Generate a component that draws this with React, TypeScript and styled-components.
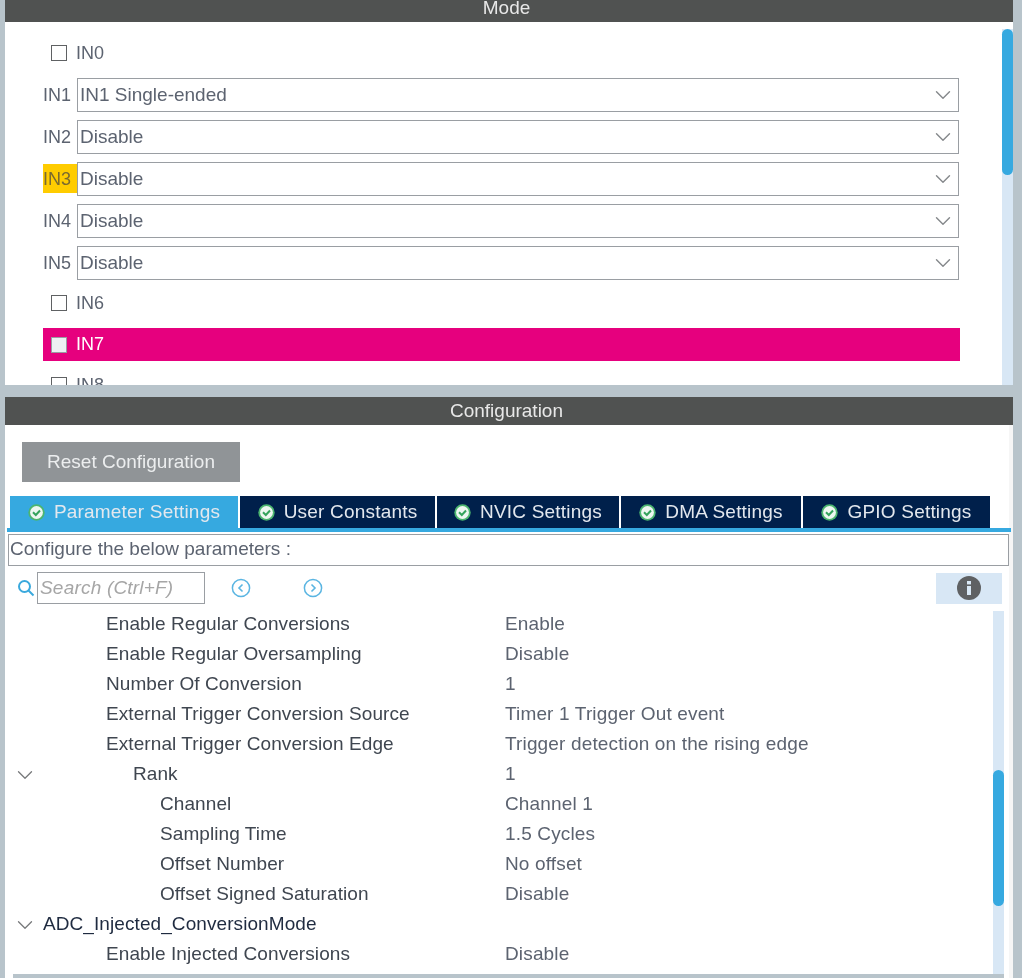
import React from "react";
import styled, { createGlobalStyle } from "styled-components";
import { ChevronDown } from "lucide-react";

const GlobalStyle = createGlobalStyle`
  html, body {
    margin: 0;
    padding: 0;
    background: #b8c4cb;
  }
  body {
    font-family: "Liberation Sans", Arial, sans-serif;
    overflow: hidden;
  }
`;

const channels = [
  { label: "IN1", value: "IN1 Single-ended" },
  { label: "IN2", value: "Disable" },
  { label: "IN3", value: "Disable", warn: true },
  { label: "IN4", value: "Disable" },
  { label: "IN5", value: "Disable" },
];

const tabs = [
  { label: "Parameter Settings", width: 228, active: true },
  { label: "User Constants", width: 195 },
  { label: "NVIC Settings", width: 182 },
  { label: "DMA Settings", width: 180 },
  { label: "GPIO Settings", width: 187 },
];

const params = [
  { name: "Enable Regular Conversions", value: "Enable", level: 1 },
  { name: "Enable Regular Oversampling", value: "Disable", level: 1 },
  { name: "Number Of Conversion", value: "1", level: 1 },
  { name: "External Trigger Conversion Source", value: "Timer 1 Trigger Out event", level: 1 },
  { name: "External Trigger Conversion Edge", value: "Trigger detection on the rising edge", level: 1 },
  { name: "Rank", value: "1", level: 2, open: true },
  { name: "Channel", value: "Channel 1", level: 3 },
  { name: "Sampling Time", value: "1.5 Cycles", level: 3 },
  { name: "Offset Number", value: "No offset", level: 3 },
  { name: "Offset Signed Saturation", value: "Disable", level: 3 },
  { name: "ADC_Injected_ConversionMode", value: "", level: 0, open: true },
  { name: "Enable Injected Conversions", value: "Disable", level: 1 },
];

const CheckIcon = () => (
  <svg width="17" height="17" viewBox="0 0 17 17">
    <circle cx="8.5" cy="8.5" r="8.2" fill="#4cb56f" />
    <circle cx="8.5" cy="8.5" r="6.4" fill="#eef7f1" />
    <path d="M5 8.3 L7.8 11 L12 6.5" fill="none" stroke="#35a35c" strokeWidth="2" />
  </svg>
);

const ArrowCircle = ({ dir }: { dir: "left" | "right" }) => (
  <svg width="20" height="20" viewBox="0 0 20 20">
    <circle cx="10" cy="10" r="8.6" fill="none" stroke="#5ab5e2" strokeWidth="1.5" />
    <path
      d={dir === "left" ? "M11.5 6.5 L8 10 L11.5 13.5" : "M8.5 6.5 L12 10 L8.5 13.5"}
      fill="none"
      stroke="#5ab5e2"
      strokeWidth="1.6"
    />
  </svg>
);

const App = () => {
  return (
    <Page>
      <GlobalStyle />
      <ModePanel>
        <ModeHeader>Mode</ModeHeader>
        <PanelBody>
          <ModeList>
            <CheckRow>
              <CheckBox />
              IN0
            </CheckRow>
            {channels.map((c) => (
              <SelectRow key={c.label}>
                <ChannelLabel $warn={c.warn}>{c.label}</ChannelLabel>
                <Select>
                  {c.value}
                  <ChevronDown size={26} strokeWidth={1.3} color="#85888b" />
                </Select>
              </SelectRow>
            ))}
            <CheckRow $short>
              <CheckBox />
              IN6
            </CheckRow>
            <PinkRow>
              <CheckBox $filled />
              IN7
            </PinkRow>
            <CheckRow>
              <CheckBox />
              IN8
            </CheckRow>
          </ModeList>
          <TopScroll>
            <TopThumb />
          </TopScroll>
        </PanelBody>
      </ModePanel>

      <ConfigPanel>
        <ConfigHeader>Configuration</ConfigHeader>
        <ConfigBody>
          <ResetButton>Reset Configuration</ResetButton>
          <TabBar>
            {tabs.map((t) => (
              <Tab key={t.label} $active={t.active} $width={t.width}>
                <CheckIcon />
                {t.label}
              </Tab>
            ))}
          </TabBar>
          <TabLine />
          <Notice>Configure the below parameters :</Notice>
          <SearchRow>
            <SearchGlass width="18" height="18" viewBox="0 0 18 18">
              <circle cx="7.5" cy="7.5" r="5.5" fill="none" stroke="#3aa9dd" strokeWidth="2" />
              <path d="M11.5 11.5 L16.5 16.5" stroke="#3aa9dd" strokeWidth="2" />
            </SearchGlass>
            <SearchBox>Search (Ctrl+F)</SearchBox>
            <NavButtons>
              <ArrowCircle dir="left" />
              <ArrowCircle dir="right" />
            </NavButtons>
            <InfoBox>
              <svg width="24" height="24" viewBox="0 0 24 24">
                <circle cx="12" cy="12" r="12" fill="#5f6163" />
                <rect x="10" y="10" width="4" height="9" fill="#d9e8f5" />
                <rect x="10" y="5" width="4" height="3.4" fill="#d9e8f5" />
              </svg>
            </InfoBox>
          </SearchRow>
          <TreeArea>
            <TreeMain>
              <Tree>
                {params.map((p) => (
                  <TreeRow key={p.name}>
                    {p.open && (
                      <Twist>
                        <ChevronDown size={26} strokeWidth={1.2} color="#77797b" />
                      </Twist>
                    )}
                    <TreeName $level={p.level}>{p.name}</TreeName>
                    <TreeValue>{p.value}</TreeValue>
                  </TreeRow>
                ))}
              </Tree>
              <TreeScroll>
                <TreeThumb />
              </TreeScroll>
            </TreeMain>
            <BottomBar />
          </TreeArea>
        </ConfigBody>
      </ConfigPanel>
    </Page>
  );
};

const Page = styled.div`
  width: 1022px;
  height: 978px;
  padding: 0 9px 0 5px;
  box-sizing: border-box;
  overflow: hidden;
  display: flex;
  flex-direction: column;
  gap: 12px;
  filter: blur(0.5px);
`;

const ModePanel = styled.section`
  height: 385px;
  flex: none;
  display: flex;
  flex-direction: column;
  background: #fff;
  overflow: hidden;
`;

const ModeHeader = styled.div`
  height: 22px;
  flex: none;
  background: #505251;
  color: #e8e8e8;
  font-size: 19px;
  line-height: 16px;
  text-align: center;
  padding-right: 5px;
  box-sizing: border-box;
`;

const PanelBody = styled.div`
  flex: 1;
  min-height: 0;
  display: flex;
  overflow: hidden;
`;

const ModeList = styled.div`
  flex: 1;
  padding: 14px 0 0 38px;
  font-size: 18px;
  color: #5c6370;
`;

const CheckRow = styled.div<{ $short?: boolean }>`
  height: ${(p) => (p.$short ? "30px" : "34px")};
  margin-bottom: ${(p) => (p.$short ? "10px" : "8px")};
  display: flex;
  align-items: center;
  padding-left: 8px;
  gap: 9px;
`;

const CheckBox = styled.span<{ $filled?: boolean }>`
  width: 14px;
  height: 14px;
  flex: none;
  border: 1.5px solid ${(p) => (p.$filled ? "#9a9da3" : "#5f6163")};
  background: ${(p) => (p.$filled ? "#eef0f3" : "#fff")};
`;

const SelectRow = styled.div`
  height: 34px;
  width: 916px;
  margin-bottom: 8px;
  display: flex;
  align-items: center;
`;

const ChannelLabel = styled.span<{ $warn?: boolean }>`
  width: 34px;
  height: 29px;
  flex: none;
  line-height: 31px;
  margin-top: -1px;
  background: ${(p) => (p.$warn ? "#ffcc00" : "transparent")};
  color: ${(p) => (p.$warn ? "#7a6a30" : "#5c6370")};
`;

const Select = styled.div`
  flex: 1;
  height: 34px;
  box-sizing: border-box;
  border: 1.5px solid #9a9ea3;
  display: flex;
  align-items: center;
  justify-content: space-between;
  padding: 0 2px 0 2px;
  font-size: 19px;
`;

const PinkRow = styled.div`
  width: 917px;
  height: 33px;
  margin-bottom: 7px;
  background: #e6007e;
  color: #fff;
  display: flex;
  align-items: center;
  padding-left: 8px;
  gap: 9px;
  box-sizing: border-box;
`;

const TopScroll = styled.div`
  width: 11px;
  flex: none;
  background: linear-gradient(#fff 7px, #d8e7f5 7px);
`;

const TopThumb = styled.div`
  height: 146px;
  margin-top: 7px;
  border-radius: 6px;
  background: #36a9e0;
`;

const ConfigPanel = styled.section`
  flex: 1;
  min-height: 0;
  display: flex;
  flex-direction: column;
  background: #fff;
  overflow: hidden;
`;

const ConfigHeader = styled.div`
  height: 28px;
  flex: none;
  background: #505251;
  color: #e8e8e8;
  font-size: 19px;
  line-height: 28px;
  text-align: center;
  padding-right: 5px;
  box-sizing: border-box;
`;

const ConfigBody = styled.div`
  flex: 1;
  min-height: 0;
  display: flex;
  flex-direction: column;
  align-items: flex-start;
  padding: 17px 0 0 3px;
  border-right: 4px solid #f6f6f6;
`;

const ResetButton = styled.div`
  width: 218px;
  height: 40px;
  margin-left: 14px;
  background: #909497;
  color: #eceeef;
  font-size: 19px;
  display: flex;
  align-items: center;
  justify-content: center;
  flex: none;
`;

const TabBar = styled.div`
  margin: 14px 0 0 2px;
  display: flex;
  gap: 2px;
  flex: none;
`;

const Tab = styled.div<{ $active?: boolean; $width: number }>`
  width: ${(p) => p.$width}px;
  height: 32px;
  box-sizing: border-box;
  background: ${(p) => (p.$active ? "#36a9e0" : "#00204b")};
  color: #e3e8ee;
  font-size: 19px;
  letter-spacing: 0.2px;
  display: flex;
  align-items: center;
  justify-content: center;
  gap: 9px;
`;

const TabLine = styled.div`
  width: 1004px;
  height: 4px;
  flex: none;
  margin-left: -1px;
  background: #36a9e0;
`;

const Notice = styled.div`
  width: 1001px;
  height: 32px;
  flex: none;
  margin: 2px 0 0;
  box-sizing: border-box;
  border: 1.5px solid #9a9ea3;
  color: #5c6370;
  font-size: 19px;
  line-height: 27px;
  padding-left: 1px;
`;

const SearchRow = styled.div`
  width: 994px;
  height: 32px;
  flex: none;
  margin-top: 6px;
  padding-left: 9px;
  display: flex;
  align-items: center;
  box-sizing: border-box;
`;

const SearchGlass = styled.svg`
  flex: none;
  margin-right: 2px;
`;

const SearchBox = styled.div`
  width: 168px;
  height: 32px;
  box-sizing: border-box;
  border: 1.5px solid #9a9ea3;
  color: #a6a6a6;
  font-size: 19px;
  font-style: italic;
  letter-spacing: 0.2px;
  line-height: 30px;
  padding-left: 2px;
`;

const NavButtons = styled.div`
  display: flex;
  gap: 52px;
  margin-left: 26px;
`;

const InfoBox = styled.div`
  width: 66px;
  height: 31px;
  margin-left: auto;
  background: #d8e7f5;
  display: flex;
  align-items: center;
  justify-content: center;
`;

const TreeArea = styled.div`
  flex: 1;
  min-height: 0;
  width: 996px;
  margin-top: 7px;
  display: flex;
  flex-direction: column;
`;

const TreeMain = styled.div`
  height: 363px;
  flex: none;
  display: flex;
`;

const Tree = styled.div`
  flex: 1;
  min-width: 0;
  margin-top: -2px;
`;

const TreeRow = styled.div`
  height: 30px;
  display: flex;
  align-items: center;
  position: relative;
  font-size: 19px;
  letter-spacing: 0.08px;
`;

const Twist = styled.span`
  position: absolute;
  left: 4px;
  top: 3px;
  display: flex;
`;

const TreeName = styled.span<{ $level: number }>`
  width: 497px;
  flex: none;
  box-sizing: border-box;
  padding-left: ${(p) => (p.$level === 0 ? 35 : 71 + p.$level * 27)}px;
  color: ${(p) => (p.$level === 0 ? "#1f2b40" : "#3f4650")};
`;

const TreeValue = styled.span`
  color: #5c6370;
  letter-spacing: 0.15px;
`;

const BottomBar = styled.div`
  height: 5px;
  flex: none;
  margin-left: 5px;
  background: #b8c4cb;
`;

const TreeScroll = styled.div`
  width: 11px;
  flex: none;
  background: #d8e7f5;
`;

const TreeThumb = styled.div`
  height: 136px;
  margin-top: 159px;
  border-radius: 6px;
  background: #36a9e0;
`;

export default App;
